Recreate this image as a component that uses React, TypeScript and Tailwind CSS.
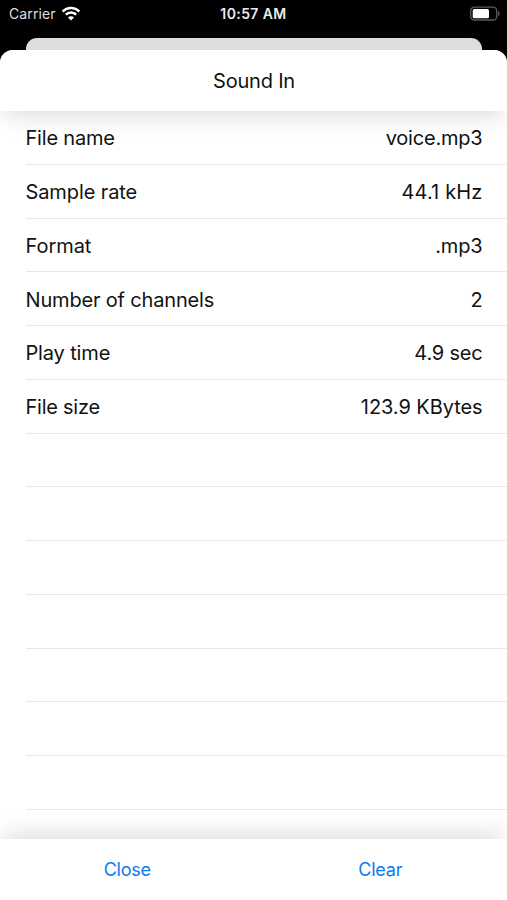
const rows: { label: string; value: string; ls: string; vs: string }[] = [
  { label: 'File name', value: 'voice.mp3', ls: 'tracking-[-0.2px]', vs: 'tracking-[-0.2px]' },
  { label: 'Sample rate', value: '44.1 kHz', ls: 'tracking-[-0.1px]', vs: 'tracking-[0.15px]' },
  { label: 'Format', value: '.mp3', ls: 'tracking-[-0.05px]', vs: 'tracking-[-0.15px]' },
  { label: 'Number of channels', value: '2', ls: 'tracking-[-0.17px]', vs: 'tracking-[-0.2px]' },
  { label: 'Play time', value: '4.9 sec', ls: 'tracking-[-0.15px]', vs: 'tracking-[-0.2px]' },
  { label: 'File size', value: '123.9 KBytes', ls: 'tracking-[-0.25px]', vs: 'tracking-[-0.07px]' },
];

const blanks = [0, 1, 2, 3, 4, 5, 6];

function WifiIcon() {
  return (
    <svg width="20" height="16" viewBox="0 0 20 16" fill="none" stroke="#fff" strokeWidth="2.5">
      <path d="M1.7 5.6C6.3 0.9 13.7 0.9 18.3 5.6" />
      <path d="M4.8 8.7C7.7 5.8 12.3 5.8 15.2 8.7" />
      <path d="M10 14.4L7 11.4C8.6 9.7 11.4 9.7 13 11.4Z" fill="#fff" stroke="none" />
    </svg>
  );
}

function BatteryIcon() {
  return (
    <svg width="32" height="16" viewBox="0 0 32 16" fill="none">
      <rect x="1.7" y="1.2" width="26" height="12.8" rx="3.6" stroke="#5c5c5c" strokeWidth="1.3" />
      <rect x="3.7" y="3.1" width="16.3" height="9.2" rx="1.6" fill="#fff" />
      <path d="M29 5.2C31.2 5.8 31.2 9.4 29 10Z" fill="#5c5c5c" />
    </svg>
  );
}

export default function App() {
  return (
    <div className="flex h-[900px] w-[507px] flex-col overflow-hidden bg-black font-['Inter','Liberation_Sans',sans-serif] text-[#121212]">
      <div className="grid h-[38px] shrink-0 grid-cols-3 items-start">
        <div className="flex h-[27px] items-center gap-[5px] pl-[9px] text-[14px] text-[#dedede]">
          <span className="tracking-[0.1px]">Carrier</span>
          <WifiIcon />
        </div>
        <div className="flex h-[27px] items-center justify-center text-[14px] font-semibold tracking-[0.4px] text-[#ececec]">
          10:57 AM
        </div>
        <div className="flex h-[27px] items-center justify-end pr-[6px]">
          <BatteryIcon />
        </div>
      </div>
      <div className="mx-[25.5px] h-[12px] shrink-0 rounded-t-[11px] bg-[#dedede]" />
      <div className="flex min-h-0 flex-1 flex-col overflow-hidden rounded-t-[13px] bg-white">
        <header className="relative z-10 flex h-[61px] shrink-0 items-center justify-center bg-white pl-px text-[20px] tracking-[-0.2px] shadow-[0_8px_24px_-4px_rgba(0,0,0,0.15)]">
          Sound In
        </header>
        <main className="min-h-0 flex-1 overflow-hidden pl-[25.5px]">
          {rows.map((row) => (
            <div
              key={row.label}
              className="flex h-[53.77px] items-center justify-between border-b border-[#e8e8e8] pt-[2px] pr-[24.5px] text-[20px]"
            >
              <span className={row.ls}>{row.label}</span>
              <span className={row.vs}>{row.value}</span>
            </div>
          ))}
          {blanks.map((n) => (
            <div key={n} className="h-[53.77px] border-b border-[#e8e8e8]" />
          ))}
        </main>
        <footer className="relative z-10 grid h-[61.5px] shrink-0 grid-cols-2 items-center bg-white text-center text-[18px] tracking-[-0.25px] text-[#0c7bee] shadow-[0_-8px_24px_-4px_rgba(0,0,0,0.15)]">
          <button type="button" className="pl-px">Close</button>
          <button type="button">Clear</button>
        </footer>
      </div>
    </div>
  );
}
